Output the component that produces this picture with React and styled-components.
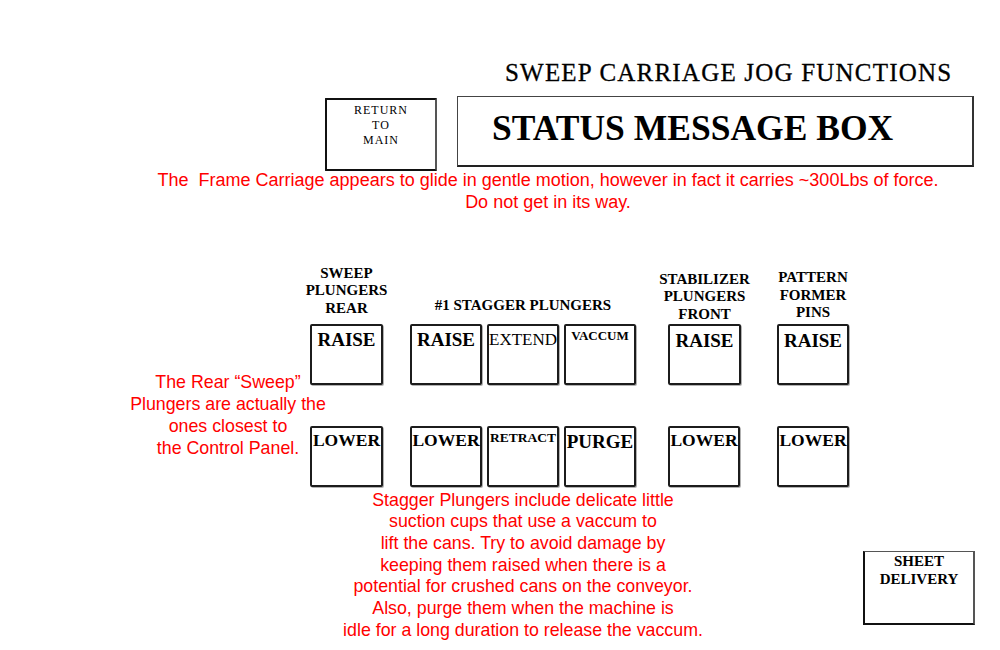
import React from 'react'
import styled, { createGlobalStyle } from 'styled-components';

const GlobalStyle = createGlobalStyle`
  html, body {
    margin: 0;
    padding: 0;
    background: #fff;
  }
  body {
    font-family: "Liberation Serif", "DejaVu Serif", serif;
    color: #000;
  }
`;

const SERIF = `"Liberation Serif", "DejaVu Serif", serif`;
const SANS = `"Liberation Sans", Arial, sans-serif`;

const Page = styled.div`
  width: 1000px;
  height: 650px;
  overflow: hidden;
  display: flex;
  flex-direction: column;
  background: #fff;
`;

const Header = styled.header`
  margin-left: 325px;
  margin-top: 59px;
  display: flex;
  flex-direction: column;
`;

const Title = styled.h1`
  margin: 0;
  padding-left: 180px;
  font-family: ${SERIF};
  font-weight: normal;
  font-size: 25px;
  line-height: 28px;
  letter-spacing: 1.2px;
  white-space: nowrap;
  -webkit-text-stroke: 0.3px #000;
`;

const TopRow = styled.div`
  display: flex;
  align-items: flex-start;
  gap: 20px;
  margin-top: 9px;
`;

const ReturnButton = styled.button`
  box-sizing: border-box;
  width: 112px;
  height: 73px;
  margin-top: 2px;
  padding: 3px 0 0;
  background: #fff;
  border: 2px solid #111;
  border-right-color: #555;
  border-radius: 1px;
  display: flex;
  flex-direction: column;
  align-items: center;
  font-family: ${SERIF};
  font-size: 12px;
  line-height: 15px;
  letter-spacing: 1px;
  color: #000;
  cursor: pointer;
`;

const StatusBox = styled.div`
  box-sizing: border-box;
  width: 517px;
  height: 71px;
  padding: 11px 0 0 34px;
  border: 1px solid #444;
  border-right: 2px solid #333;
  border-bottom: 2px solid #222;
  font-family: ${SERIF};
  font-weight: bold;
  font-size: 35.5px;
  line-height: 40px;
  white-space: nowrap;
`;

const Warning = styled.p`
  margin: -1px 0 0 96px;
  width: 904px;
  text-align: center;
  font-family: ${SANS};
  font-size: 18px;
  line-height: 21.5px;
  color: #ff0000;
  white-space: nowrap;
`;

const Controls = styled.section`
  display: flex;
  align-items: flex-start;
  margin-top: 49px;
  padding-left: 118px;
`;

const SideNote = styled.p`
  margin: 109px -28px 0 0;
  width: 220px;
  text-align: center;
  font-family: ${SANS};
  font-size: 17.8px;
  line-height: 22px;
  color: #ff0000;
  white-space: nowrap;
`;

const Group = styled.div`
  width: ${(p) => p.$w}px;
  display: flex;
  flex-direction: column;
  margin-left: ${(p) => p.$gap || 0}px;
`;

const GroupHead = styled.div`
  box-sizing: border-box;
  height: 62px;
  padding-bottom: ${(p) => p.$pb}px;
  display: flex;
  flex-direction: column;
  justify-content: flex-end;
  align-items: center;
`;

const HeadText = styled.div`
  text-align: center;
  white-space: nowrap;
  font-family: ${SERIF};
  font-weight: bold;
  font-size: 15px;
  line-height: 17.5px;
`;

const BoxRow = styled.div`
  display: flex;
  gap: 5px;
  margin-top: ${(p) => (p.$lower ? 41 : 0)}px;
`;

const JogButton = styled.button`
  box-sizing: border-box;
  flex: none;
  width: ${(p) => p.$w || 72}px;
  height: 61px;
  margin: 0;
  padding: ${(p) => p.$pt ?? 4}px 0 0;
  background: #fff;
  border: 2px solid #1c1c1c;
  border-radius: 2px;
  box-shadow: 1px 1px 0 rgba(0, 0, 0, 0.3);
  display: flex;
  justify-content: center;
  align-items: flex-start;
  font-family: ${SERIF};
  font-weight: ${(p) => (p.$light ? 'normal' : 'bold')};
  font-size: ${(p) => p.$size || 19}px;
  line-height: 1;
  color: #000;
  white-space: nowrap;
  cursor: pointer;
`;

const BottomRow = styled.div`
  display: flex;
  align-items: flex-start;
  margin-top: 2.5px;
  padding-left: 313px;
`;

const StaggerNote = styled.p`
  margin: 0;
  width: 420px;
  text-align: center;
  font-family: ${SANS};
  font-size: 17.8px;
  line-height: 21.7px;
  color: #ff0000;
  white-space: nowrap;
`;

const SheetButton = styled.button`
  box-sizing: border-box;
  width: 112px;
  height: 74px;
  margin: 61.5px 0 0 130px;
  padding: 0;
  background: #fff;
  border: 2px solid #111;
  border-top: 1px solid #555;
  border-right-color: #555;
  display: flex;
  flex-direction: column;
  align-items: center;
  font-family: ${SERIF};
  font-weight: bold;
  font-size: 15px;
  line-height: 18px;
  color: #000;
  cursor: pointer;
`;

const App = () => {
  return (
    <Page>
      <GlobalStyle />
      <Header>
        <Title>SWEEP CARRIAGE JOG FUNCTIONS</Title>
        <TopRow>
          <ReturnButton>
            <span>RETURN</span>
            <span>TO</span>
            <span>MAIN</span>
          </ReturnButton>
          <StatusBox>STATUS MESSAGE BOX</StatusBox>
        </TopRow>
      </Header>

      <Warning>
        The&nbsp; Frame Carriage appears to glide in gentle motion, however in fact it carries ~300Lbs of force.
        <br />
        Do not get in its way.
      </Warning>

      <Controls>
        <SideNote>
          The Rear “Sweep”
          <br />
          Plungers are actually the
          <br />
          ones closest to
          <br />
          the Control Panel.
        </SideNote>

        <Group $w={73}>
          <GroupHead $pb={7}>
            <HeadText>SWEEP<br />PLUNGERS<br />REAR</HeadText>
          </GroupHead>
          <BoxRow><JogButton $w={73}>RAISE</JogButton></BoxRow>
          <BoxRow $lower><JogButton $w={73} $size={17.5}>LOWER</JogButton></BoxRow>
        </Group>

        <Group $w={226} $gap={27}>
          <GroupHead $pb={10}>
            <HeadText>#1 STAGGER PLUNGERS</HeadText>
          </GroupHead>
          <BoxRow>
            <JogButton>RAISE</JogButton>
            <JogButton $light $size={17} $pt={5}>EXTEND</JogButton>
            <JogButton $size={13} $pt={3}>VACCUM</JogButton>
          </BoxRow>
          <BoxRow $lower>
            <JogButton $size={17.5}>LOWER</JogButton>
            <JogButton $size={13.5} $pt={3}>RETRACT</JogButton>
            <JogButton>PURGE</JogButton>
          </BoxRow>
        </Group>

        <Group $w={73} $gap={32}>
          <GroupHead $pb={1}>
            <HeadText>STABILIZER<br />PLUNGERS<br />FRONT</HeadText>
          </GroupHead>
          <BoxRow><JogButton $w={73} $pt={5}>RAISE</JogButton></BoxRow>
          <BoxRow $lower><JogButton $size={17.5}>LOWER</JogButton></BoxRow>
        </Group>

        <Group $w={72} $gap={36}>
          <GroupHead $pb={2.5}>
            <HeadText>PATTERN<br />FORMER<br />PINS</HeadText>
          </GroupHead>
          <BoxRow><JogButton $pt={5}>RAISE</JogButton></BoxRow>
          <BoxRow $lower><JogButton $size={17.5}>LOWER</JogButton></BoxRow>
        </Group>
      </Controls>

      <BottomRow>
        <StaggerNote>
          Stagger Plungers include delicate little
          <br />
          suction cups that use a vaccum to
          <br />
          lift the cans. Try to avoid damage by
          <br />
          keeping them raised when there is a
          <br />
          potential for crushed cans on the conveyor.
          <br />
          Also, purge them when the machine is
          <br />
          idle for a long duration to release the vaccum.
        </StaggerNote>
        <SheetButton>
          <span>SHEET</span>
          <span>DELIVERY</span>
        </SheetButton>
      </BottomRow>
    </Page>
  )
}

export default App;
